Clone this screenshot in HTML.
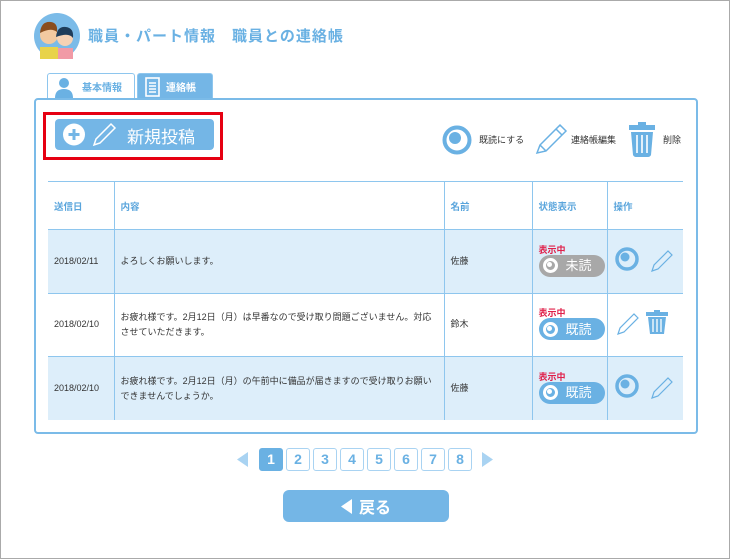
<!DOCTYPE html>
<html><head><meta charset="utf-8"><style>
*{margin:0;padding:0;box-sizing:border-box}
body{width:730px;height:559px;background:#fff;font-family:"Liberation Sans","Noto Sans CJK JP",sans-serif;position:relative;overflow:hidden;border:1px solid #aaa}
.a{position:absolute}
.title{left:87px;top:24px;font-size:15px;font-weight:bold;color:#6ab1e3;letter-spacing:1px}
.tab{top:72px;height:26px;border:1px solid #8ec6ee;border-bottom:none;border-radius:3px 3px 0 0;font-size:10px;font-weight:bold;display:flex;align-items:center}
.box{left:33px;top:97px;width:664px;height:336px;border:2px solid #7bbbe8;border-radius:4px}
table{position:absolute;left:47px;top:180px;width:635px;border-collapse:collapse;font-size:9px;color:#333;table-layout:fixed}
td,th{border-left:1px solid #8ec6ee;border-right:1px solid #8ec6ee;border-top:1px solid #8ec6ee;padding:0 6px;text-align:left}
th{height:48px;color:#5aa5dc;font-weight:bold;font-size:9.5px;border-left:none;border-right:none}
th+th{border-left:1px solid #8ec6ee}
tr td:first-child{border-left:none}tr td:last-child{border-right:none}
td{height:63.5px;line-height:15px}
tr.b td{background:#ddeefa}
.st{color:#e0204a;font-weight:bold;font-size:9px;line-height:10px}
.pill{display:inline-flex;align-items:center;width:66px;height:22px;border-radius:11px;background:#6ab1e3;color:#fff;font-size:13px;padding-left:4px;gap:8px}
.pill.g{background:#a8a8a8}
.pill i{display:inline-block;width:15px;height:15px;border-radius:50%;border:3px solid #fff;position:relative}
.pill i:after{content:"";position:absolute;left:1px;top:1px;width:5px;height:5px;border-radius:50%;background:#fff}
.pg{top:447px;width:24px;height:23px;border:1px solid #a9d3f2;border-radius:3px;color:#6ab1e3;font-size:14px;font-weight:bold;text-align:center;line-height:21px}
</style></head><body>
<svg class="a" style="left:33px;top:12px" width="46" height="46"><circle cx="23" cy="23" r="23" fill="#7bbbe8"/><circle cx="15" cy="22" r="9" fill="#f3c9a0"/><path d="M6 20q1-12 11-11q7 1 6 10q-6-5-17 1z" fill="#8a4d1e"/><circle cx="31" cy="25" r="8" fill="#f6d2b4"/><path d="M22 24q1-11 10-10q8 1 7 11q-4-6-17-1z" fill="#1f3d5a"/><path d="M6 46v-12h18v12z" fill="#e8d34a"/><path d="M24 46v-11h15v11z" fill="#f19aa6"/></svg>
<div class="a title">職員・パート情報　職員との連絡帳</div>
<div class="a tab" style="left:46px;width:88px;color:#6ab1e3;background:#fff"><svg width="34" height="24" viewBox="0 0 34 24"><circle cx="16" cy="8" r="5" fill="#6ab1e3"/><path d="M7 23q0-9 9-9q9 0 9 9z" fill="#6ab1e3"/></svg>基本情報</div>
<div class="a tab" style="left:136px;width:76px;background:#74b6e6;color:#fff"><svg width="28" height="24" viewBox="0 0 28 24"><rect x="8" y="3" width="13" height="18" fill="none" stroke="#fff" stroke-width="1.6"/><path d="M11 8h7M11 11h7M11 14h7M11 17h7" stroke="#fff" stroke-width="1.4"/></svg>連絡帳</div>
<div class="a box"></div>
<div class="a" style="left:42px;top:111px;width:180px;height:48px;border:3px solid #e60012"></div>
<div class="a" style="left:54px;top:118px;width:159px;height:31px;background:#74b6e6;border-radius:4px;color:#fff;font-size:17px"><svg class="a" style="left:5px;top:3px" width="60" height="25"><circle cx="14" cy="12.5" r="11" fill="#fff"/><path d="M14 7v11M8.5 12.5h11" stroke="#74b6e6" stroke-width="3"/><path d="M34 23l2-6 15-15 4 4-15 15z" fill="none" stroke="#fff" stroke-width="1.5"/></svg><span class="a" style="left:72px;top:4px">新規投稿</span></div>
<svg class="a" style="left:441px;top:124px" width="32" height="30"><circle cx="15" cy="15" r="12.5" fill="none" stroke="#6ab1e3" stroke-width="4"/><circle cx="13" cy="13" r="6" fill="#6ab1e3"/></svg>
<div class="a" style="left:478px;top:132px;font-size:9px;color:#333">既読にする</div>
<svg class="a" style="left:534px;top:122px" width="34" height="32"><path d="M2 30l3-8 20-20 6 6-20 20z M5 22l6 6M21 6l6 6" fill="none" stroke="#6ab1e3" stroke-width="1.5"/></svg>
<div class="a" style="left:570px;top:132px;font-size:9px;color:#333">連絡帳編集</div>
<svg class="a" style="left:626px;top:119px" width="30" height="38"><path d="M11 2h8v3h9v5h-26v-5h9z" fill="#6ab1e3"/><path d="M4 12h22l-2 23q-1 2-3 2h-12q-2 0-3-2z" fill="#6ab1e3"/><path d="M10 15v18M15 15v18M20 15v18" stroke="#fff" stroke-width="1.6"/></svg>
<div class="a" style="left:662px;top:132px;font-size:9px;color:#333">削除</div>
<table>
<colgroup><col style="width:66px"><col style="width:330px"><col style="width:88px"><col style="width:75px"><col style="width:76px"></colgroup>
<tr><th>送信日</th><th>内容</th><th>名前</th><th>状態表示</th><th>操作</th></tr>
<tr class="b"><td>2018/02/11</td><td>よろしくお願いします。</td><td>佐藤</td><td><div class="st">表示中</div><span class="pill g"><i></i>未読</span></td><td><svg width="62" height="30"><circle cx="13" cy="15" r="10" fill="none" stroke="#6ab1e3" stroke-width="3.5"/><circle cx="11" cy="13" r="4.5" fill="#6ab1e3"/><path d="M38 27l2-6 14-14 4 4-14 14z" fill="none" stroke="#6ab1e3" stroke-width="1.2"/></svg></td></tr>
<tr><td>2018/02/10</td><td>お疲れ様です。2月12日（月）は早番なので受け取り問題ございません。対応させていただきます。</td><td>鈴木</td><td><div class="st">表示中</div><span class="pill"><i></i>既読</span></td><td><svg width="62" height="30"><path d="M4 27l2-6 14-14 4 4-14 14z" fill="none" stroke="#6ab1e3" stroke-width="1.2"/><path d="M40 3h6v2h8v4h-22v-4h8z" fill="#6ab1e3"/><path d="M34 10h18l-2 17h-14z" fill="#6ab1e3"/><path d="M39 12v13M43 12v13M47 12v13" stroke="#fff" stroke-width="1.3"/></svg></td></tr>
<tr class="b"><td>2018/02/10</td><td>お疲れ様です。2月12日（月）の午前中に備品が届きますので受け取りお願いできませんでしょうか。</td><td>佐藤</td><td><div class="st">表示中</div><span class="pill"><i></i>既読</span></td><td><svg width="62" height="30"><circle cx="13" cy="15" r="10" fill="none" stroke="#6ab1e3" stroke-width="3.5"/><circle cx="11" cy="13" r="4.5" fill="#6ab1e3"/><path d="M38 27l2-6 14-14 4 4-14 14z" fill="none" stroke="#6ab1e3" stroke-width="1.2"/></svg></td></tr>
</table>
<svg class="a" style="left:236px;top:451px" width="12" height="15"><path d="M11 0v15L0 7.5z" fill="#a9d3f2"/></svg>
<div class="a pg" style="left:258px;background:#6ab1e3;color:#fff;border-color:#6ab1e3">1</div>
<div class="a pg" style="left:285px">2</div><div class="a pg" style="left:312px">3</div><div class="a pg" style="left:339px">4</div><div class="a pg" style="left:366px">5</div><div class="a pg" style="left:393px">6</div><div class="a pg" style="left:420px">7</div><div class="a pg" style="left:447px">8</div>
<svg class="a" style="left:480px;top:451px" width="12" height="15"><path d="M1 0v15L12 7.5z" fill="#a9d3f2"/></svg>
<div class="a" style="left:282px;top:489px;width:166px;height:32px;background:#74b6e6;border-radius:6px;color:#fff;font-size:16px;font-weight:bold;display:flex;align-items:center;justify-content:center;gap:6px"><svg width="12" height="15"><path d="M11 0v15L0 7.5z" fill="#fff"/></svg>戻る</div>
</body></html>
